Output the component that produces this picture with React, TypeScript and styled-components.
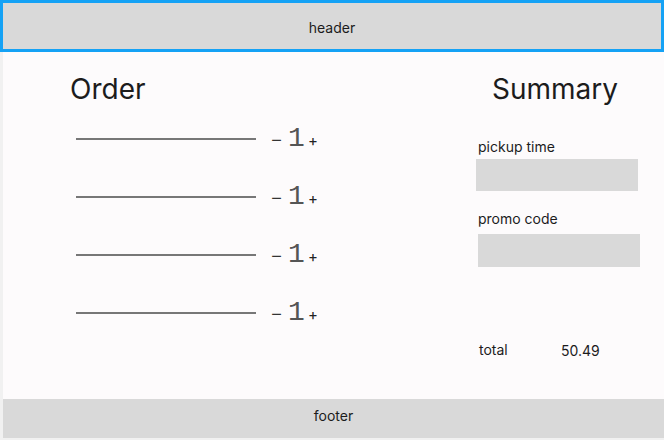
import React, { FC } from 'react';
import styled, { createGlobalStyle } from 'styled-components';

const GlobalStyle = createGlobalStyle`
  html, body {
    margin: 0;
    padding: 0;
    background: #f1f1f1;
  }
  body {
    font-family: Inter, 'Noto Sans', sans-serif;
    color: #1c1c1c;
  }
`;

const Page = styled.div`
  width: 664px;
  height: 440px;
  display: flex;
  flex-direction: column;
  background: #f1f1f1;
  overflow: hidden;
`;

const Header = styled.header`
  box-sizing: border-box;
  height: 52px;
  border: 3px solid #15a2f5;
  background: #d9d9d9;
  display: flex;
  align-items: center;
  justify-content: center;
  font-size: 14px;
  padding-top: 2px;
`;

const Body = styled.div`
  margin-left: 3px;
  flex: 1;
  display: flex;
  flex-direction: column;
  padding-bottom: 2px;
`;

const Main = styled.main`
  flex: 1;
  background: #fdfbfc;
  display: flex;
  justify-content: space-between;
`;

const OrderColumn = styled.section`
  padding: 20px 0 0 67px;
  display: flex;
  flex-direction: column;
`;

const Title = styled.h1`
  margin: 0;
  font-size: 28px;
  font-weight: 400;
  line-height: 34px;
`;

const Rows = styled.div`
  margin-top: 4px;
  display: flex;
  flex-direction: column;
`;

const Row = styled.div`
  height: 58px;
  display: flex;
  align-items: center;
  padding-left: 6px;
`;

const Line = styled.div`
  width: 180px;
  height: 2px;
  background: #777;
  margin-right: 14px;
`;

const Stepper = styled.div`
  display: flex;
  align-items: center;
`;

const Minus = styled.span`
  font-size: 20px;
  line-height: 1;
  font-weight: 300;
  color: #333;
  margin-right: 5px;
`;

const Plus = styled.span`
  font-size: 15px;
  line-height: 1;
  font-weight: 400;
  color: #222;
  margin-left: 3px;
  margin-top: 2px;
`;

const Qty = styled.span`
  font-family: 'Liberation Mono', monospace;
  font-size: 28px;
  line-height: 1;
  color: #555;
`;

const SummaryColumn = styled.section`
  width: 188px;
  padding-top: 20px;
  display: flex;
  flex-direction: column;
`;

const SummaryTitle = styled(Title)`
  padding-left: 16px;
`;

const Field = styled.div<{ $shift: number; $top: number }>`
  display: flex;
  flex-direction: column;
  padding-left: ${(p) => p.$shift}px;
  margin-top: ${(p) => p.$top}px;
`;

const Label = styled.label<{ $shift?: number; $gap?: number }>`
  font-size: 14px;
  line-height: 18px;
  padding-left: ${(p) => p.$shift ?? 0}px;
  margin-bottom: ${(p) => p.$gap ?? 3}px;
`;

const InputBox = styled.div<{ $h: number }>`
  width: 162px;
  height: ${(p) => p.$h}px;
  background: #d9d9d9;
`;

const TotalRow = styled.div`
  margin-top: 75px;
  padding-left: 3px;
  display: flex;
  align-items: center;
  font-size: 14px;
`;

const TotalLabel = styled.span`
  width: 82px;
  margin-top: -3px;
`;

const Footer = styled.footer`
  box-sizing: border-box;
  height: 39px;
  background: #d9d9d9;
  display: flex;
  align-items: center;
  justify-content: center;
  font-size: 14px;
  padding-bottom: 6px;
`;

const items = [1, 1, 1, 1];

const App: FC = () => {
  return (
    <>
      <GlobalStyle />
      <Page>
        <Header>header</Header>
        <Body>
          <Main>
            <OrderColumn>
              <Title>Order</Title>
              <Rows>
                {items.map((q, i) => (
                  <Row key={i}>
                    <Line />
                    <Stepper>
                      <Minus>−</Minus>
                      <Qty>{q}</Qty>
                      <Plus>+</Plus>
                    </Stepper>
                  </Row>
                ))}
              </Rows>
            </OrderColumn>
            <SummaryColumn>
              <SummaryTitle>Summary</SummaryTitle>
              <Field $shift={0} $top={32}>
                <Label $shift={2}>pickup time</Label>
                <InputBox $h={32} />
              </Field>
              <Field $shift={2} $top={19}>
                <Label $shift={-1} $gap={6}>promo code</Label>
                <InputBox $h={33} />
              </Field>
              <TotalRow>
                <TotalLabel>total</TotalLabel>
                <span>50.49</span>
              </TotalRow>
            </SummaryColumn>
          </Main>
          <Footer>footer</Footer>
        </Body>
      </Page>
    </>
  );
};

export default App;
